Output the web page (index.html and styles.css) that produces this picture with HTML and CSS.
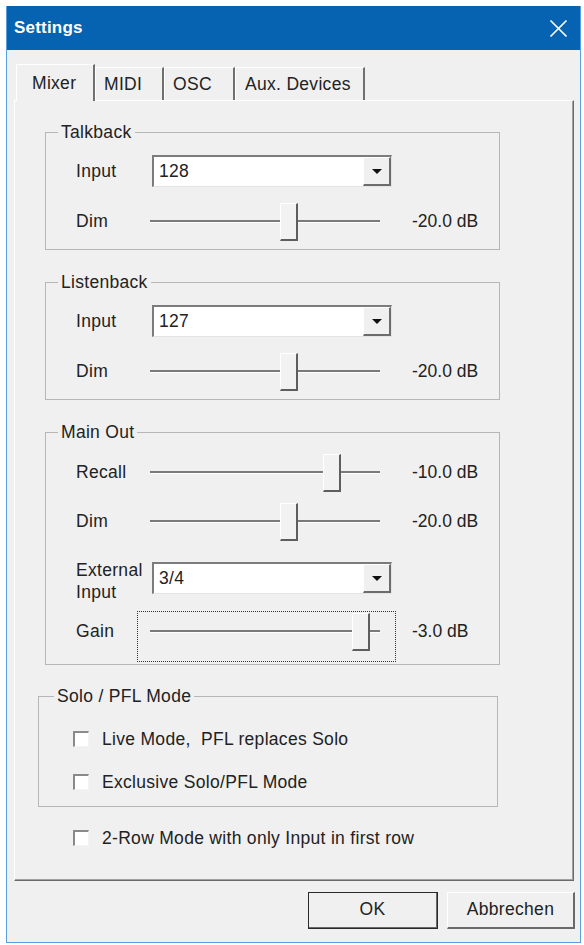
FILE: index.html
```html
<!DOCTYPE html>
<html>
<head>
  <meta charset="utf-8">
  <title>Settings</title>
  <link rel="stylesheet" href="styles.css">
</head>
<body>
  <div class="window">
    <div class="titlebar">
      <span class="titlebar_text">Settings</span>
      <svg class="titlebar_close" width="19" height="19" viewBox="0 0 19 19">
        <path d="M1.5 1.5L17.5 17.5M17.5 1.5L1.5 17.5" stroke="#fff" stroke-width="1.7" fill="none"/>
      </svg>
    </div>
    <div class="client">
      <div class="tabs">
        <div class="tab tab-mixer selected">Mixer</div>
        <div class="tab tab-midi">MIDI</div>
        <div class="tab tab-osc">OSC</div>
        <div class="tab tab-aux">Aux. Devices</div>
      </div>
      <div class="panel">

        <fieldset class="group">
          <legend>Talkback</legend>
          <div class="row row-combo">
            <span class="label">Input</span>
            <div class="combo">
              <span class="combo_text">128</span>
              <span class="combo_button"><i class="arrow"></i></span>
            </div>
          </div>
          <div class="row row-slider">
            <span class="label">Dim</span>
            <div class="slider">
              <div class="slider_track"></div>
              <div class="slider_thumb" style="left: 130px"></div>
            </div>
            <span class="value">-20.0 dB</span>
          </div>
        </fieldset>

        <fieldset class="group">
          <legend>Listenback</legend>
          <div class="row row-combo">
            <span class="label">Input</span>
            <div class="combo">
              <span class="combo_text">127</span>
              <span class="combo_button"><i class="arrow"></i></span>
            </div>
          </div>
          <div class="row row-slider">
            <span class="label">Dim</span>
            <div class="slider">
              <div class="slider_track"></div>
              <div class="slider_thumb" style="left: 130px"></div>
            </div>
            <span class="value">-20.0 dB</span>
          </div>
        </fieldset>

        <fieldset class="group group-main">
          <legend>Main Out</legend>
          <div class="row row-slider row-recall">
            <span class="label">Recall</span>
            <div class="slider">
              <div class="slider_track"></div>
              <div class="slider_thumb" style="left: 173px"></div>
            </div>
            <span class="value">-10.0 dB</span>
          </div>
          <div class="row row-slider row-dim">
            <span class="label">Dim</span>
            <div class="slider">
              <div class="slider_track"></div>
              <div class="slider_thumb" style="left: 130px"></div>
            </div>
            <span class="value">-20.0 dB</span>
          </div>
          <div class="row row-combo row-external">
            <span class="label label-two">External<br>Input</span>
            <div class="combo">
              <span class="combo_text">3/4</span>
              <span class="combo_button"><i class="arrow"></i></span>
            </div>
          </div>
          <div class="row row-slider row-gain">
            <span class="label">Gain</span>
            <div class="slider focused">
              <div class="slider_track"></div>
              <div class="slider_thumb" style="left: 202px"></div>
            </div>
            <span class="value">-3.0 dB</span>
          </div>
        </fieldset>

        <fieldset class="group group-solo">
          <legend>Solo / PFL Mode</legend>
          <label class="check check-first"><span class="check_box"></span>Live Mode,&nbsp; PFL replaces Solo</label>
          <label class="check"><span class="check_box"></span>Exclusive Solo/PFL Mode</label>
        </fieldset>

        <label class="check check-tworow"><span class="check_box"></span>2-Row Mode with only Input in first row</label>
      </div>
      <div class="buttons">
        <div class="button default">OK</div>
        <div class="button">Abbrechen</div>
      </div>
    </div>
  </div>
</body>
</html>
```

FILE: styles.css
```css
* {
  box-sizing: border-box;
}
body {
  margin: 0;
  background: #fff;
  font-family: "Liberation Sans", Arial, sans-serif;
  font-size: 17.5px;
  letter-spacing: 0.3px;
  color: #222;
}
.window {
  margin: 6px 0 0 6px;
  width: 575px;
  height: 937px;
  border: 1px solid #5a9fdf;
  border-top: none;
  background: #f0f0f0;
}

/* title bar */
.titlebar {
  height: 44px;
  background: #0663b1;
  display: flex;
  align-items: center;
  justify-content: space-between;
  padding: 0 12px 0 7px;
}
.titlebar_text {
  color: #fff;
  font-weight: bold;
  font-size: 17px;
  letter-spacing: 0.2px;
}

.client {
  padding: 14px 5px 0 7px;
}

/* tabs */
.tabs {
  display: flex;
  align-items: flex-end;
  height: 36px;
  margin-left: 2px;
  position: relative;
  z-index: 1;
}
.tab {
  height: 33px;
  line-height: 32px;
  padding-left: 8px;
  border-top: 1px solid #fff;
  border-left: 1px solid #fff;
  border-right: 2px solid #707070;
  white-space: nowrap;
}
.tab.selected {
  height: 37px;
  line-height: 36px;
  margin-bottom: -1px;
  background: #f0f0f0;
}
.tab-mixer {
  width: 79px;
  padding-left: 15px;
}
.tab-midi {
  width: 69px;
}
.tab-osc {
  width: 71px;
}
.tab-aux {
  width: 130px;
  padding-left: 9px;
}

.panel {
  width: 560px;
  height: 781px;
  border-top: 1px solid #fff;
  border-left: 1px solid #fff;
  border-right: 1px solid #6a6a6a;
  border-bottom: 1px solid #6a6a6a;
  box-shadow: inset -1px -1px 0 #a0a0a0;
}

/* group boxes */
.group {
  margin: 21px 0 0 30px;
  width: 455px;
  padding: 0 0 8px 0;
  border: 1px solid #b6b6b6;
  min-width: 0;
}
.group + .group {
  margin-top: 22px;
}
.group legend {
  margin-left: 12px;
  padding: 0 3px;
  line-height: 20px;
}
.group-main {
  padding-bottom: 13px;
}
.group-solo {
  width: 460px;
  margin-left: 23px;
  padding-bottom: 14px;
}
.group.group-solo {
  margin-top: 21px;
}
.group-solo legend {
  margin-left: 15px;
}

.row {
  display: flex;
  align-items: center;
  padding-left: 30px;
}
.row-combo {
  height: 32px;
  margin-top: 13px;
}
.row-slider {
  height: 40px;
  margin-top: 14px;
}
.row-recall {
  margin-top: 10px;
}
.row-dim {
  margin-top: 9px;
}
.row-external {
  margin-top: 21px;
}
.row-gain {
  margin-top: 17px;
}
.label {
  width: 74px;
  flex: none;
}
.label-two {
  line-height: 22px;
  margin-top: 6px;
}

/* combo box */
.combo {
  margin-left: 2px;
  width: 240px;
  height: 32px;
  display: flex;
  border-top: 2px solid #7c7c7c;
  border-left: 2px solid #7c7c7c;
  border-right: 1px solid #e4e4e4;
  border-bottom: 1px solid #e4e4e4;
  background: #fff;
}
.combo_text {
  flex: 1;
  padding-left: 5px;
  line-height: 28px;
}
.combo_button {
  width: 28px;
  display: flex;
  align-items: center;
  justify-content: center;
  background: #f0f0f0;
  border-top: 1px solid #fff;
  border-left: 1px solid #fff;
  border-right: 2px solid #6c6c6c;
  border-bottom: 2px solid #6c6c6c;
}
.arrow {
  width: 0;
  height: 0;
  border-left: 5px solid transparent;
  border-right: 5px solid transparent;
  border-top: 5px solid #111;
}

/* slider */
.slider {
  position: relative;
  width: 230px;
  height: 40px;
  flex: none;
}
.slider_track {
  margin-top: 19px;
  height: 2px;
  background: #7a7a7a;
  box-shadow: 0 1px 0 #fff;
}
.slider_thumb {
  position: absolute;
  top: 2px;
  width: 18px;
  height: 38px;
  background: #f2f2f2;
  border-top: 1px solid #fff;
  border-left: 1px solid #fff;
  border-right: 2px solid #5e5e5e;
  border-bottom: 2px solid #5e5e5e;
}
.slider.focused::after {
  content: "";
  position: absolute;
  left: -13px;
  right: -16px;
  top: 0;
  bottom: -11px;
  border: 1px dotted #333;
}
.value {
  margin-left: 32px;
  white-space: nowrap;
  letter-spacing: 0;
}

/* check boxes */
.check {
  display: flex;
  align-items: center;
  height: 20px;
  margin-top: 23px;
  padding-left: 34px;
}
.check-first {
  margin-top: 23px;
}
.check-tworow {
  margin-top: 21px;
  padding-left: 58px;
}
.check_box {
  width: 16px;
  height: 16px;
  margin-right: 13px;
  background: #fff;
  border-top: 2px solid #8a8a8a;
  border-left: 2px solid #8a8a8a;
  border-right: 1px solid #f4f4f4;
  border-bottom: 1px solid #f4f4f4;
}

/* dialog buttons */
.buttons {
  display: flex;
  justify-content: flex-end;
  gap: 9px;
  margin-top: 11px;
}
.button {
  width: 128px;
  height: 37px;
  line-height: 33px;
  text-align: center;
  background: #f0f0f0;
  border-top: 1px solid #fff;
  border-left: 1px solid #fff;
  border-right: 2px solid #696969;
  border-bottom: 2px solid #696969;
}
.button.default {
  width: 130px;
  outline: 1px solid #2a2a2a;
  outline-offset: -1px;
}
```
